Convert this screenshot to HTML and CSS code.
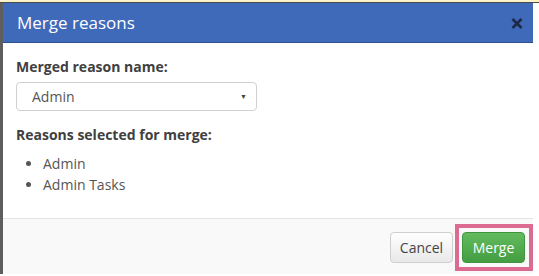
FILE: index.html
```html
<!DOCTYPE html>
<html lang="en">
<head>
    <meta charset="UTF-8">
    <title>Merge reasons</title>
    <link rel="stylesheet" href="styles.css">
</head>
<body>
    <div class="top-strip"></div>
    <div class="page">
    <div class="backdrop-edge"></div>
    <div class="modal">
        <div class="modal-header">
        <h4 class="modal-title">Merge reasons</h4>
        <button class="close" type="button" aria-label="Close">
            <svg width="12" height="11" viewBox="0 0 12 11">
            <path d="M1.5 1 L10.5 10 M10.5 1 L1.5 10" stroke="#1c2a47" stroke-width="2.6" stroke-linecap="butt"/>
            </svg>
        </button>
        </div>
        <div class="modal-body">
        <div class="form-group">
            <label>Merged reason name:</label>
            <div class="select">
            <span>Admin</span>
            <span class="caret">&#9660;</span>
            </div>
        </div>
        <label>Reasons selected for merge:</label>
        <ul class="reason-list">
            <li>Admin</li>
            <li>Admin Tasks</li>
        </ul>
        </div>
        <div class="modal-footer">
        <button class="btn btn-default" type="button">Cancel</button>
        <span class="highlight">
            <button class="btn btn-success" type="button">Merge</button>
        </span>
        </div>
    </div>
    </div>
</body>
</html>
```

FILE: styles.css
```css
body {
    margin: 0;
    background-color: #fff;
    font-family: "Open Sans", Arial, sans-serif;
    font-size: 14px;
    color: #444;
}
.top-strip {
    height: 2px;
    background-color: #fcf4c8;
    border-bottom: 1px solid #4a4a4a;
}
.page {
    display: flex;
}
.backdrop-edge {
    width: 3px;
    background-color: #5e5e5e;
}
.modal {
    width: 530px;
    background-color: #fff;
}
.modal-header {
    height: 39px;
    background-color: #3f69b9;
    border-bottom: 1px solid #2c5193;
    display: flex;
    align-items: center;
    justify-content: space-between;
    padding: 0 10px 0 14px;
}
.modal-title {
    margin: 0;
    font-size: 17px;
    font-weight: normal;
    color: #fff;
}
.close {
    background: none;
    border: none;
    padding: 0;
    width: 12px;
    height: 11px;
    display: flex;
    margin-top: 2px;
}
.modal-body {
    padding: 14px 13px 0 13px;
    height: 161px;
}
.form-group {
    margin-bottom: 14px;
}
label {
    display: block;
    font-weight: bold;
    line-height: 20px;
    margin-bottom: 5px;
    color: #404040;
}
.select {
    height: 27px;
    border: 1px solid #d0d0d0;
    border-radius: 4px;
    display: flex;
    align-items: center;
    justify-content: space-between;
    padding: 0 9px 0 15px;
    width: 215px;
    color: #555;
}
.caret {
    font-size: 7px;
    color: #444;
}
.reason-list {
    margin: 8px 0 0 0;
    padding-left: 27px;
    line-height: 21px;
    color: #555;
}
.modal-footer {
    border-top: 1px solid #e5e5e5;
    background-color: #f9f9f9;
    height: 56px;
    display: flex;
    justify-content: flex-end;
    align-items: flex-start;
    padding: 5px 0 0 0;
    box-sizing: border-box;
    gap: 2px;
}
.btn {
    height: 31px;
    width: 63px;
    border-radius: 4px;
    font-family: "Open Sans", Arial, sans-serif;
    font-size: 14px;
    padding: 0;
    cursor: pointer;
}
.btn-default {
    margin-top: 8px;
    background: linear-gradient(#ffffff, #e8e8e8);
    border: 1px solid #cfcfcf;
    color: #444;
}
.btn-success {
    display: block;
    background: linear-gradient(#63bb5e, #449d42);
    border: 1px solid #3f953d;
    color: #fff;
}
.highlight {
    display: block;
    border: 4px solid #dc6a91;
    padding: 4px 4px 4px 3px;
}
```
